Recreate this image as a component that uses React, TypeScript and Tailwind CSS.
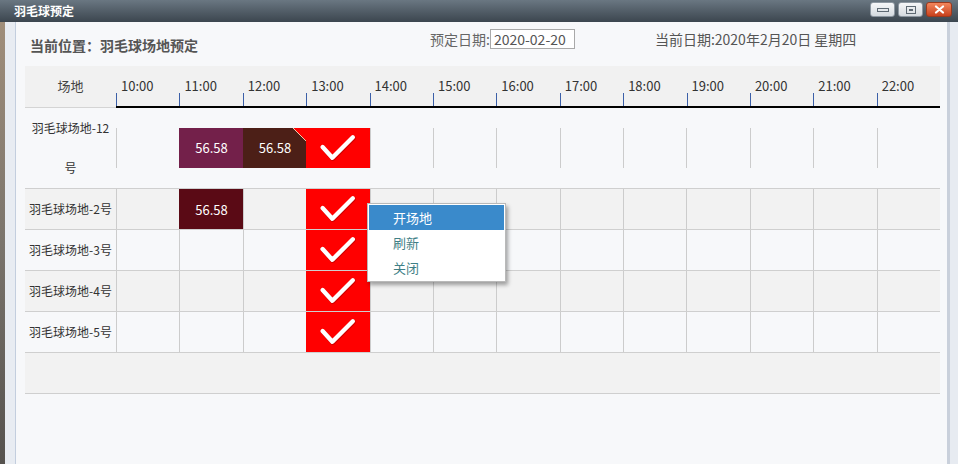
import React from "react";

const times = ["10:00", "11:00", "12:00", "13:00", "14:00", "15:00", "16:00", "17:00", "18:00", "19:00", "20:00", "21:00", "22:00"];

type Slot = { bg?: string; price?: string; check?: boolean; corner?: boolean };

type Court = { label: string[]; tall?: boolean; slots: Record<number, Slot> };

const courts: Court[] = [
  {
    label: ["羽毛球场地-12", "号"],
    tall: true,
    slots: {
      1: { bg: "bg-[#73204a]", price: "56.58" },
      2: { bg: "bg-[#4c1f17]", price: "56.58", corner: true },
      3: { bg: "bg-[#ff0000]", check: true },
    },
  },
  {
    label: ["羽毛球场地-2号"],
    slots: {
      1: { bg: "bg-[#5a0a15]", price: "56.58" },
      3: { bg: "bg-[#ff0000]", check: true },
    },
  },
  { label: ["羽毛球场地-3号"], slots: { 3: { bg: "bg-[#ff0000]", check: true } } },
  { label: ["羽毛球场地-4号"], slots: { 3: { bg: "bg-[#ff0000]", check: true } } },
  { label: ["羽毛球场地-5号"], slots: { 3: { bg: "bg-[#ff0000]", check: true } } },
];

function Check() {
  return (
    <svg width="64" height="40" viewBox="0 0 64 40" className="block">
      <polyline
        points="16,19 26,30 47,9"
        fill="none"
        stroke="rgba(120,0,0,0.35)"
        strokeWidth="5"
        strokeLinecap="round"
        strokeLinejoin="round"
        transform="translate(0.6,0.8)"
      />
      <polyline points="16,19 26,30 47,9" fill="none" stroke="#ffffff" strokeWidth="4.5" strokeLinecap="round" strokeLinejoin="round" />
    </svg>
  );
}

function SlotCell({ slot }: { slot?: Slot }) {
  if (!slot) {
    return <div className="h-[40px] border-l border-[#cccccc]" />;
  }
  return (
    <div className={`relative h-[40px] border-l border-transparent ${slot.bg} flex items-center justify-center overflow-hidden`}>
      {slot.price && <span className="text-[13px] text-white leading-none">{slot.price}</span>}
      {slot.check && <Check />}
      {slot.corner && (
        <svg width="13" height="13" viewBox="0 0 13 13" className="absolute top-0 right-0">
          <polygon points="0,0 13,0 13,13" fill="#ff0000" />
          <line x1="0" y1="0" x2="13" y2="13" stroke="#f3c9a8" strokeWidth="1" />
        </svg>
      )}
    </div>
  );
}

export default function App() {
  return (
    <div className="relative w-[958px] h-[464px] flex flex-col overflow-hidden bg-[#5b5954] font-['Noto_Sans_CJK_SC','Noto_Sans',sans-serif]">
      {/* title bar */}
      <div className="h-[22px] flex bg-gradient-to-b from-[#6a7782] to-[#3c464f] pl-[14px] pr-[6px]">
        <span className="self-center text-[12px] font-bold text-white leading-none">羽毛球预定</span>
        <div className="ml-auto mt-[2px] flex gap-[3px]">
          <div className="w-[25px] h-[15px] rounded-[3px] border border-[#8d97a1] bg-gradient-to-b from-[#f6f7f9] to-[#d5dadf] flex items-center justify-center">
            <div className="w-[12px] h-[4px] border border-[#5f6a74] mt-[1px]" />
          </div>
          <div className="w-[25px] h-[15px] rounded-[3px] border border-[#8d97a1] bg-gradient-to-b from-[#f6f7f9] to-[#d5dadf] flex items-center justify-center">
            <div className="w-[10px] h-[8px] border border-[#5f6a74] flex items-center justify-center">
              <div className="w-[4px] h-[2px] bg-[#5f6a74]" />
            </div>
          </div>
          <div className="w-[26px] h-[15px] rounded-[3px] border border-[#9b3a1e] bg-gradient-to-b from-[#f3855b] to-[#c8401b] flex items-center justify-center">
            <svg width="11" height="9" viewBox="0 0 11 9">
              <path d="M2 1.5 L9 7.5 M9 1.5 L2 7.5" stroke="#ffffff" strokeWidth="2.2" strokeLinecap="round" />
            </svg>
          </div>
        </div>
      </div>

      <div className="flex flex-1 min-h-0">
        {/* left frame */}
        <div className="w-[5px] bg-gradient-to-b from-[#a08e7a] via-[#7a746c] to-[#55524e]" />
        <div className="w-[11px] bg-[#e8ecf2] border-r border-[#c3cede]" />

        {/* content */}
        <main className="flex-1 bg-[#f7f8fa] flex flex-col pl-[9px]">
          {/* info bar */}
          <div className="h-[44px] flex items-start text-[14px] leading-[20px]">
            <div className="ml-[5px] mt-[13px] w-[400px] font-semibold text-[#555555]">当前位置：羽毛球场地预定</div>
            <div className="mt-[7px] flex text-[#666666]">
              <span>预定日期:</span>
              <div className="w-[85px] h-[20px] border border-[#a9a9a9] bg-white px-[3px] leading-[18px] text-[#555555]">2020-02-20</div>
            </div>
            <div className="ml-[80px] mt-[7px] text-[#555555]">当前日期:2020年2月20日 星期四</div>
          </div>

          {/* table */}
          <div className="w-[915px]">
            <div className="grid grid-cols-[91px_repeat(13,minmax(0,1fr))] h-[41px] bg-[#f1f1f1]">
              <div className="flex items-center justify-center border-b border-[#d4d4d4] text-[13px] text-[#444444] pb-[1px]">场地</div>
              <div className="col-span-13 flex border-b-2 border-black">
                {times.map((t) => (
                  <div key={t} className="flex-1 flex flex-col">
                    <span className="pl-[5px] pt-[13px] text-[13px] leading-[14px] text-[#333333]">{t}</span>
                    <div className="mt-auto h-[13px] w-px bg-[#3b5fa8]" />
                  </div>
                ))}
              </div>
            </div>

            {courts.map((c, i) => (
              <div
                key={i}
                className={`grid grid-cols-[91px_repeat(13,minmax(0,1fr))] items-center border-b border-[#cfcfcf] ${c.tall ? "h-[82px]" : "h-[41px]"} ${i % 2 === 1 ? "bg-[#f2f2f2]" : "bg-[#f7f8fa]"}`}
              >
                <div className="text-center text-[12px] leading-[40px] text-[#333333]">
                  {c.label.map((l) => (
                    <div key={l}>{l}</div>
                  ))}
                </div>
                {times.map((t, j) => (
                  <SlotCell key={t} slot={c.slots[j]} />
                ))}
              </div>
            ))}

            <div className="h-[41px] bg-[#f2f2f2] border-b border-[#cfcfcf]" />
          </div>
        </main>

        {/* right frame */}
        <div className="w-[11px] bg-[#e7ebf1] border-l-[3px] border-[#c9d0db]" />
      </div>

      {/* context menu */}
      <div className="absolute left-[367px] top-[203px] w-[139px] bg-white border border-[#b9b9b9] p-px shadow-[2px_3px_4px_rgba(0,0,0,0.35)] text-[13px]">
        <div className="h-[25px] flex items-center pl-[24px] bg-[#3a8acb] text-white">开场地</div>
        <div className="h-[25px] flex items-center pl-[24px] text-[#3f7f86]">刷新</div>
        <div className="h-[25px] flex items-center pl-[24px] text-[#3f7f86]">关闭</div>
      </div>
    </div>
  );
}
